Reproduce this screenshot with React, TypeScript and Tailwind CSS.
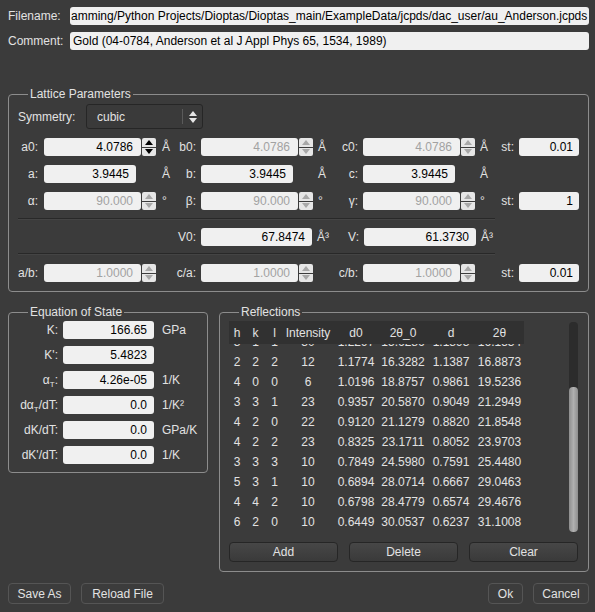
import React from "react";

const Up = ({ c }: { c: string }) => (
  <svg width="8" height="5" viewBox="0 0 8 5">
    <path d="M0 5 L4 0 L8 5 Z" fill={c} />
  </svg>
);
const Down = ({ c }: { c: string }) => (
  <svg width="8" height="5" viewBox="0 0 8 5">
    <path d="M0 0 L4 5 L8 0 Z" fill={c} />
  </svg>
);

function Spin({ disabled }: { disabled?: boolean }) {
  const c = disabled ? "#a8a8a8" : "#000000";
  return (
    <div className="flex flex-col w-[14px] h-[18px] gap-[1px] ml-[1px]">
      <div className="flex-1 bg-[#e6e6e6] rounded-t-[2px] flex items-center justify-center">
        <Up c={c} />
      </div>
      <div className="flex-1 bg-[#e6e6e6] rounded-b-[2px] flex items-center justify-center">
        <Down c={c} />
      </div>
    </div>
  );
}

function Box({ value, w, disabled, pr }: { value: string; w: string; disabled?: boolean; pr?: string }) {
  return (
    <div
      className={
        "h-[18px] bg-[#f0f0f0] rounded-[3px] flex items-center justify-end " +
        (pr ?? "pr-[7px]") +
        " " +
        w +
        (disabled ? " text-[#a2a2a2]" : " text-black")
      }
    >
      {value}
    </div>
  );
}

function SpinField({ value, disabled }: { value: string; disabled?: boolean }) {
  return (
    <div className="flex items-center w-[112px]">
      <Box value={value} w="w-[97px]" disabled={disabled} pr="pr-[8px]" />
      <Spin disabled={disabled} />
    </div>
  );
}

function PlainField({ value }: { value: string }) {
  return (
    <div className="flex items-center w-[112px]">
      <Box value={value} w="w-[92px]" />
    </div>
  );
}

function Lbl({ children, w }: { children?: React.ReactNode; w: string }) {
  return <div className={"text-right pr-[5px] whitespace-nowrap " + w}>{children}</div>;
}

function Unit({ children, w }: { children?: React.ReactNode; w: string }) {
  return <div className={"pl-[5px] whitespace-nowrap " + w}>{children}</div>;
}

function Sep() {
  return (
    <div className="w-[477px] flex flex-col">
      <div className="h-px bg-[#282828]" />
      <div className="h-px bg-[#444444]" />
    </div>
  );
}

function Legend({ children }: { children: React.ReactNode }) {
  return <legend className="ml-[19px] px-[2px] leading-[14px] text-[#e2e2e2]">{children}</legend>;
}

const rows: string[][] = [
  ["3", "1", "1", "30", "1.2297", "15.6286", "1.1893", "16.1534"],
  ["2", "2", "2", "12", "1.1774", "16.3282", "1.1387", "16.8873"],
  ["4", "0", "0", "6", "1.0196", "18.8757", "0.9861", "19.5236"],
  ["3", "3", "1", "23", "0.9357", "20.5870", "0.9049", "21.2949"],
  ["4", "2", "0", "22", "0.9120", "21.1279", "0.8820", "21.8548"],
  ["4", "2", "2", "23", "0.8325", "23.1711", "0.8052", "23.9703"],
  ["3", "3", "3", "10", "0.7849", "24.5980", "0.7591", "25.4480"],
  ["5", "3", "1", "10", "0.6894", "28.0714", "0.6667", "29.0463"],
  ["4", "4", "2", "10", "0.6798", "28.4779", "0.6574", "29.4676"],
  ["6", "2", "0", "10", "0.6449", "30.0537", "0.6237", "31.1008"],
];

const colW = ["w-[16px]", "w-[21px]", "w-[17px]", "w-[50px]", "w-[46px]", "w-[48px]", "w-[48px]", "w-[49px]"];
const headers = ["h", "k", "l", "Intensity", "d0", "2θ_0", "d", "2θ"];

function Btn({ children, w }: { children: React.ReactNode; w: string }) {
  return (
    <div
      className={
        "h-[20px] rounded-[4px] border border-[#262626] bg-gradient-to-b from-[#474747] to-[#3a3a3a] flex items-center justify-center text-[#e2e2e2] " +
        w
      }
    >
      {children}
    </div>
  );
}

function BottomBtn({ children, w }: { children: React.ReactNode; w: string }) {
  return (
    <div
      className={
        "h-[21px] rounded-[4px] border border-[#555555] bg-[#3c3c3c] flex items-center justify-center text-[#e2e2e2] " +
        w
      }
    >
      {children}
    </div>
  );
}

export default function App() {
  return (
    <div className="w-[595px] h-[612px] overflow-hidden bg-[#3b3b3b] text-[#e2e2e2] text-[12px] font-['Liberation_Sans',Arial,sans-serif] pl-[8px] pr-[6px] pt-[7px] flex flex-col">
      {/* Filename */}
      <div className="flex items-center h-[18px]">
        <div className="w-[62px]">Filename:</div>
        <div className="flex-1 h-[18px] bg-[#f0f0f0] rounded-[3px] text-black flex items-center overflow-hidden whitespace-nowrap pl-[1px]">
          amming/Python Projects/Dioptas/Dioptas_main/ExampleData/jcpds/dac_user/au_Anderson.jcpds
        </div>
      </div>
      <div className="flex items-center h-[18px] mt-[7px]">
        <div className="w-[62px]">Comment:</div>
        <div className="flex-1 h-[18px] bg-[#f0f0f0] rounded-[3px] text-black flex items-center pl-[3px] whitespace-nowrap overflow-hidden">
          Gold (04-0784, Anderson et al J Appl Phys 65, 1534, 1989)
        </div>
      </div>

      {/* Lattice Parameters */}
      <fieldset className="mt-[37px] border border-[#8c8c8c] rounded-[4px] p-0 m-0">
        <Legend>Lattice Parameters</Legend>
        <div className="pl-[9px] pt-[3px] pb-[9px] flex flex-col">
          <div className="flex items-center h-[25px]">
            <div className="w-[68px]">Symmetry:</div>
            <div className="w-[117px] h-[25px] rounded-[3px] border border-[#262626] bg-[#3a3a3a] flex items-center">
              <span className="pl-[10px] flex-1">cubic</span>
              <div className="w-px h-[15px] bg-[#5a5a5a]" />
              <div className="w-[19px] flex flex-col items-center gap-[2px]">
                <Up c="#e6e6e6" />
                <Down c="#e6e6e6" />
              </div>
            </div>
          </div>

          <div className="flex items-center h-[18px] mt-[9px]">
            <Lbl w="w-[26px] pr-[6px]">a0:</Lbl>
            <SpinField value="4.0786" />
            <Unit w="w-[16px] pl-[6px]">Å</Unit>
            <Lbl w="w-[29px]">b0:</Lbl>
            <SpinField value="4.0786" disabled />
            <Unit w="w-[16px]">Å</Unit>
            <Lbl w="w-[34px]">c0:</Lbl>
            <SpinField value="4.0786" disabled />
            <Unit w="w-[17px]">Å</Unit>
            <Lbl w="w-[27px]">st:</Lbl>
            <Box value="0.01" w="w-[60px]" pr="pr-[6px]" />
          </div>

          <div className="flex items-center h-[18px] mt-[9px]">
            <Lbl w="w-[26px] pr-[6px]">a:</Lbl>
            <PlainField value="3.9445" />
            <Unit w="w-[16px] pl-[6px]">Å</Unit>
            <Lbl w="w-[29px]">b:</Lbl>
            <PlainField value="3.9445" />
            <Unit w="w-[16px]">Å</Unit>
            <Lbl w="w-[34px]">c:</Lbl>
            <PlainField value="3.9445" />
            <Unit w="w-[17px]">Å</Unit>
          </div>

          <div className="flex items-center h-[18px] mt-[9px]">
            <Lbl w="w-[26px] pr-[6px]">α:</Lbl>
            <SpinField value="90.000" disabled />
            <Unit w="w-[16px] pl-[6px]">°</Unit>
            <Lbl w="w-[29px]">β:</Lbl>
            <SpinField value="90.000" disabled />
            <Unit w="w-[16px]">°</Unit>
            <Lbl w="w-[34px]">γ:</Lbl>
            <SpinField value="90.000" disabled />
            <Unit w="w-[17px]">°</Unit>
            <Lbl w="w-[27px]">st:</Lbl>
            <Box value="1" w="w-[60px]" pr="pr-[6px]" />
          </div>

          <div className="mt-[8px]">
            <Sep />
          </div>

          <div className="flex items-center h-[18px] mt-[8px]">
            <div className="w-[154px]" />
            <Lbl w="w-[29px]">V0:</Lbl>
            <Box value="67.8474" w="w-[111px]" />
            <Unit w="w-[18px]">Å³</Unit>
            <Lbl w="w-[34px]">V:</Lbl>
            <Box value="61.3730" w="w-[112px]" />
            <Unit w="w-[17px]">Å³</Unit>
          </div>

          <div className="mt-[7px]">
            <Sep />
          </div>

          <div className="flex items-center h-[18px] mt-[9px]">
            <Lbl w="w-[26px] pr-[6px]">a/b:</Lbl>
            <SpinField value="1.0000" disabled />
            <Unit w="w-[16px]"></Unit>
            <Lbl w="w-[29px]">c/a:</Lbl>
            <SpinField value="1.0000" disabled />
            <Unit w="w-[16px]"></Unit>
            <Lbl w="w-[34px]">c/b:</Lbl>
            <SpinField value="1.0000" disabled />
            <Unit w="w-[17px]"></Unit>
            <Lbl w="w-[27px]">st:</Lbl>
            <Box value="0.01" w="w-[60px]" pr="pr-[6px]" />
          </div>
        </div>
      </fieldset>

      {/* Lower section */}
      <div className="flex items-start mt-[13px] gap-[11px]">
        <fieldset className="w-[200px] border border-[#8c8c8c] rounded-[4px] p-0 m-0">
          <Legend>Equation of State</Legend>
          <div className="pt-[2px] pb-[8px] flex flex-col gap-[7px]">
            {[
              { l: <>K:</>, v: "166.65", u: "GPa" },
              { l: <>K':</>, v: "5.4823", u: "" },
              {
                l: (
                  <>
                    α<span className="text-[8px] relative top-[3px]">T</span>:
                  </>
                ),
                v: "4.26e-05",
                u: "1/K",
              },
              {
                l: (
                  <>
                    dα<span className="text-[8px] relative top-[3px]">T</span>/dT:
                  </>
                ),
                v: "0.0",
                u: "1/K²",
              },
              { l: <>dK/dT:</>, v: "0.0", u: "GPa/K" },
              { l: <>dK'/dT:</>, v: "0.0", u: "1/K" },
            ].map((r, i) => (
              <div key={i} className="flex items-center h-[18px]">
                <div className="w-[54px] text-right pr-[5px] whitespace-nowrap">{r.l}</div>
                <Box value={r.v} w="w-[91px]" />
                <div className="pl-[8px] whitespace-nowrap">{r.u}</div>
              </div>
            ))}
          </div>
        </fieldset>

        <fieldset className="w-[370px] border border-[#8c8c8c] rounded-[4px] p-0 m-0">
          <Legend>Reflections</Legend>
          <div className="pl-[9px] pr-[10px] pt-[2px] pb-[9px] flex flex-col">
            <div className="flex h-[211px]">
              <div className="w-[340px] flex flex-col">
                <div className="flex h-[23px] w-[295px] bg-[#313131] items-center">
                  {headers.map((h, i) => (
                    <div key={i} className={"text-center whitespace-nowrap " + colW[i]}>
                      {h}
                    </div>
                  ))}
                </div>
                <div className="h-[188px] overflow-hidden">
                  <div className="-mt-[12px]">
                    {rows.map((r, ri) => (
                      <div key={ri} className="flex h-[20px] items-center w-[295px]">
                        {r.map((c, ci) => (
                          <div key={ci} className={"text-center whitespace-nowrap " + colW[ci]}>
                            {c}
                          </div>
                        ))}
                      </div>
                    ))}
                  </div>
                </div>
              </div>
              <div className="w-[9px] mt-[1px] h-[210px] rounded-[4px] bg-[#2c2c2c] flex flex-col justify-end">
                <div className="h-[145px] rounded-[4px] bg-gradient-to-r from-[#8e8e8e] via-[#b0b0b0] to-[#8e8e8e]" />
              </div>
            </div>
            <div className="flex mt-[10px] gap-[11px]">
              <Btn w="w-[109px]">Add</Btn>
              <Btn w="w-[109px]">Delete</Btn>
              <Btn w="w-[109px]">Clear</Btn>
            </div>
          </div>
        </fieldset>
      </div>

      {/* Bottom buttons */}
      <div className="flex mt-[11px] items-center">
        <BottomBtn w="w-[63px]">Save As</BottomBtn>
        <div className="w-[10px]" />
        <BottomBtn w="w-[83px]">Reload File</BottomBtn>
        <div className="flex-1" />
        <BottomBtn w="w-[35px]">Ok</BottomBtn>
        <div className="w-[10px]" />
        <BottomBtn w="w-[56px]">Cancel</BottomBtn>
      </div>
    </div>
  );
}
